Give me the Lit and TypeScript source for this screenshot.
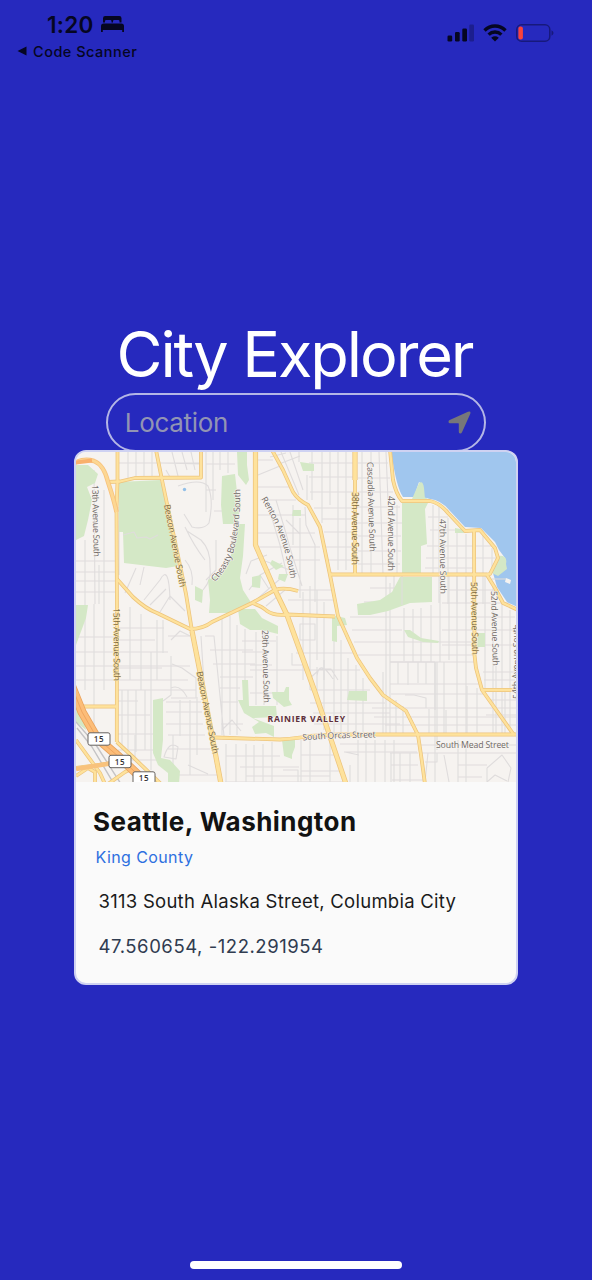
import { LitElement, html, svg, css } from "lit";
import { customElement } from "lit/decorators.js";

const MAJOR = [
  "M117.5 450V481L116.5 510L117 615L116.8 742",
  "M108 482L120 481.500L135 478L201 477.500V450",
  "M156 450L162 480L186 594L192 631L200 672L213 741L221 784",
  "M117 579L133 597Q146 609 157 613L190 629Q203 629 212 622L252 603L275 590Q284 587 298 591",
  "M252 603Q262 606 267 611Q274 616 287 614.500L335 616.500",
  "M272 450L283 470L293 492Q298 500 308 505L320 527L330 575L338 616L357 658L370 678L383 695L406 711L418 735L421 755L425 784",
  "M330 574.500H487L490 574L498 558L495 548L480 530L465 531L448 513Q440 503 430 501H402Q396 494 393 480L390 450",
  "M487 575L495 588L503 603L518 610",
  "M474 531L474.500 655L476 668L482 690L514 735",
  "M482 690H518",
  "M215 737.500L230 738L280 739.500Q300 738 310 736L340 734.500H516",
  "M76 706.500H116",
  "M116.800 742L133 757L161 784",
  "M76 740L100 773L105 784", "M76 768L113 763", "M108 784L125 772L133 768", "M95 784V772L88 768L76 776",
];
const WIDE = [
  "M255.500 450V545L275 590L287 615L315 692L346 784",
  "M355 450V480",
  "M192 631L200 672L213 741L221 784",
];
const THIN_MAJOR = ["M355 476V574"];
const RAMP = "M74 463Q84 458 94 461Q104 465 108 482Q114 500 116.500 512";

const PARKS = [
  "M76 465H88L98 474L95 483L87 487L92 500L88 520L84 536L76 540Z",
  "M119 482L160 480L169 505L178 566L166 568L124 563L123 532H119Z",
  "M76 605H88L86 618L76 645Z",
  "M76 690L82 708L86 730L76 722Z",
  "M237 452H247V465L249 480L246 485L238 475Z",
  "M222 476L235 474L237 492L241 505L237 524H223L221 505Z",
  "M237 524H245L243 556L240 578L243 590L252 604L230 611V613H209L210 600L208 580L222 572L230 560L234 540Z",
  "M195 586L203 590L202 603L195 600Z",
  "M300 462L314 464V471L303 471Z", "M293 510H301V516H292Z",
  "M272 560L284 566L276 570L270 564Z", "M279 574L288 574L285 582L278 579Z", "M252 577L261 575L260 588L252 587Z",
  "M238 609H255L262 618L278 626V634L262 630L250 630L240 624Z",
  "M242 680H248L249 706L276 706L277 717L253 718L274 726V737L266 733L255 734L252 727L259 722L244 713L238 700H243Z",
  "M272 692L284 692L286 687H289V700L292 705L284 707L273 698Z",
  "M282 740H295V747L292 755V759L284 756Z",
  "M332 615L345 618L347 625L337 626V642L332 641Z", "M349 691L367 691V701L347 700Z",
  "M153 700L163 698V740L161 758L170 760L180 771L179 784H168L168 773L158 765L153 753L153 728Z",
  "M402 502L416 499L423 497L422 485L420 481L423 484L428 503L425 509L427 544L421 546V575H402Z",
  "M400 577H432V602L410 603L388 611L370 615H358L357 604L380 600L392 592Z",
  "M455 528L466 530L464 533H455Z", "M478 633H485V647H477Z",
  "M404 630L410 630L421 638L439 641L438 643L423 642L408 637Z",
  "M498 558L506 560L506 570L500 575L494 571Z",
];

const MINOR = [
  /* northwest blocks */
  "M76 561H115M76 581H116M94 470L95 604M85 540V604M104 490V604M99 565V604M119 507V575M76 592H116M76 572H116",
  "M119 463H200M128 452V479M136 452V478M144 452V478M152 452V478M162 463L201 464M172 452L178 476M182 452L187 470M191 452L195 470",
  "M166 470L170 477M206 452V512M213 452V500M206 464H235M206 490H216M214 511H226M220 452V470M228 452V473",
  "M178 486Q200 478 208 486Q214 500 209 523Q204 530 192 527L184 514",
  "M187 531L201 540Q211 550 210 567Q212 580 203 590M185 527Q194 546 205 560",
  "M185 560Q194 570 192 585M216 540V570L206 580",
  "M140 585L144 567M144 600L160 580Q169 563 170 600M150 605L166 589M160 612L170 596L185 611M125 593L136 568",
  /* west blocks */
  "M76 637H120M76 652H168M76 666H190M76 680H188M85 604V690M94 604V734M104 604V690M130 607V680M141 614V690M157 620V680M163 620V653",
  "M118 628H164M118 640H155M118 668H162M118 690H196M122 690V750M128 690V750M136 690V752M145 690V750M151 652V770M118 701H138M118 715H150M118 734H155M118 750H157M168 636H190",
  "M171 640L180 631L190 636M171 656V695L163 701M172 664L182 668L196 678V698H171M171 688Q180 684 187 697",
  "M166 702H201M166 712H202M166 724H203M168 735H205M168 749H210M190 700V775M180 700V736M173 735V770M197 697V755M164 757Q169 740 178 747L176 759Z",
  "M168 775H222M188 765L208 774M145 760H160M118 757V750M135 735V757M128 760H154",
  /* central */
  "M201 636L205 700M205 636H214L224 736M210 650H253M213 664H255M222 618V735M230 616V735M237 625V735M245 629V700M220 677H253M220 688H240M221 702H238M221 724H243M222 730L232 720L241 731",
  "M256 632V705M264 628V705M277 636V705M242 641H276M242 652H264M250 665H272M250 693H280M250 670H310",
  "M256 460H273M258 475L280 466M256 487H290M260 500H296M258 515H306M256 533H315M258 547H320M270 457L286 453M279 464L300 456",
  "M281 452L299 495M290 452L303 490M299 452V462M307 475V500M312 452V500M322 452V523M330 452V505M338 452V570M346 452V570M309 463H355M309 477H355M310 492H355M314 508H354M322 519H355M324 532H355M326 547H355M328 560H355",
  "M268 505L280 545L287 575M276 500L285 530L290 548L302 586M293 505V545M300 518V598M305 507L306 525L315 545V602M286 520L300 534M262 560L290 570M260 575L282 563M285 560H320",
  "M246 574L251 561L267 555M249 590L260 575L269 589M256 600L280 579M266 606L285 590M303 592V680M310 586V690M317 590V660M324 602V680M288 600H333M289 590H333",
  "M300 624V640H315V624ZM296 653H355M292 653V665H302M304 670H360M308 680L320 669H331L338 680M310 690H370M317 667V690M324 660V730M334 615V735M341 640V735M348 658V735M356 665V735M363 678V735M310 703H385M313 713H390M314 724H400M317 676Q319 658 333 679",
  "M226 744V782M236 744V782M246 744V782M254 745V782M263 744V782M272 742V782M301 740V782M310 740V782M330 740V782M226 756H280M240 767H299M246 776H330M301 755H336M301 771H342M283 770H298V782M225 782H344",
  "M340 744H417M344 752H417M350 765V782M358 740V782M366 740V782M375 740V782M385 740V782M394 740V782M345 752L359 755",
  /* eastern strip */
  "M362 452V573M371 452V574M379 452L383 574M386 452L388 500M397 505V574M358 463H388M358 478H390M358 492H393M358 507H400M358 523H402M358 536H401M358 551H401M358 564H400",
  "M433 505V574M439 505V603M448 518V604M457 533V604M466 534V604M483 532V604M492 548V570M428 517H448M430 530H460M427 546H495M426 558H498M425 568H475",
  "M386 576V735M394 576V605M404 608V661M413 609V662M421 608V662M431 605V662M440 575V662M449 575V660M457 575V735M466 575V735M485 576V690M493 585V735M502 604V735M510 610V735",
  "M370 588H402M364 602H374M350 617H472M352 630H402M354 642H475M358 655H475M390 662H435M435 662V785M444 662V734M390 583V735M442 590H515M442 603H512M442 617H515M442 630H515M442 645H517",
  "M390 662H475M390 684H480M391 694H483M383 672V735M398 662V684M408 662V685M418 662V683M426 662V684M435 662V710M467 686V735M477 688V735",
  "M405 695H414L426 698V708M372 708H517M374 717H517M385 725H517M429 709V735M437 662V750M446 710V735M396 700V735M403 706V735",
  "M483 672H515M484 680H515M496 655V735M488 700H517M505 690V735M486 715H517",
  "M421 745H517M421 753H517M390 753H418M391 765H418M392 780H425M391 753V782M400 753V782M410 753V782M428 753L425 782M437 753V762H425M444 755L449 782M458 740V782M466 745V782M458 765H487M458 777H482M487 768L502 755L511 768L508 782M487 768V782L495 775L507 781",
];

const RAIL = "M76 722L96 745L121 784M77 728L92 747L114 784";

type Label = [string, string, number, string?];
/* name, baseline path, drawn length, colour class */
const LABELS: Label[] = [
  ["13th Avenue South", "M92 485L94 565", 72],
  ["Beacon Avenue South", "M164 505L182 598", 84, "onroad"],
  ["15th Avenue South", "M113.500 608L114 690", 73, "onroad"],
  ["Beacon Avenue South", "M196.500 672L215 765", 84, "onroad"],
  ["29th Avenue South", "M262 630L264 710", 73],
  ["Cheasty Boulevard South", "M215 582Q234 562 237 535Q241 515 240 478", 99],
  ["Renton Avenue South", "M261 499Q271 515 277 529Q287 552 291.500 585", 86],
  ["38th Avenue South", "M352 492V575", 73, "onroad"],
  ["Cascadia Avenue South", "M367 462L370 562", 90],
  ["42nd Avenue South", "M387.500 496V580", 75],
  ["47th Avenue South", "M439.500 519L440.500 605", 75],
  ["50th Avenue South", "M471 582L472.500 665", 73, "onroad"],
  ["52nd Avenue South", "M491 591L493 675", 75],
  ["54th Avenue South", "M519.500 699V600", 75],
  ["South Orcas Street", "M303 740.500Q335 737.500 390 737.500", 73],
  ["South Mead Street", "M436 748H520", 73],
];

const SHIELDS: [number, number][] = [[99, 739], [120, 761.500], [144, 778]];

@customElement("city-map")
export class CityMap extends LitElement {
  static styles = css`
    :host { display: block; height: 330px; }
    svg { display: block; width: 100%; height: 100%; }
    path { fill: none; stroke-linejoin: round; }
    .land { fill: #f6f3f0; }
    .park { fill: #d4e8c6; }
    .water { fill: #a0c6ee; }
    .minor { stroke: #dfdcdc; stroke-width: 1.1; }
    .rail { stroke: #c4c3c5; stroke-width: 1.4; }
    .case { stroke: #edc47c; stroke-width: 3.8; }
    .fill { stroke: #fee29c; stroke-width: 2.3; }
    .wcase { stroke: #edc47c; stroke-width: 5.2; }
    .wfill { stroke: #fee29c; stroke-width: 3.7; }
    .fwcase { stroke: #e9a25c; stroke-width: 9; }
    .fw { stroke: #fcbd78; stroke-width: 7.5; }
    .fwend { stroke: #f9b06c; stroke-width: 4; }
    .fwline { stroke: #f0a55f; stroke-width: 1; }
    .ramp { stroke: #f8c27c; stroke-width: 4.5; }
    .rampin { stroke: #fcd793; stroke-width: 2.8; }
    text { font-family: "Open Sans", "Noto Sans", sans-serif; font-size: 8.8px; fill: #6f6864; stroke: #f8f5f2; stroke-width: 1.2px; paint-order: stroke; stroke-linejoin: round; }
    .onroad { fill: #7b683e; stroke: #fde9b8; stroke-width: 1px; }
    .district { font-weight: 700; font-size: 8.6px; fill: #5e2f3b; }
    .shield { fill: #fff; stroke: #66625f; stroke-width: 1; }
    .route { font-weight: 600; font-size: 8px; fill: #333; stroke: none; text-anchor: middle; letter-spacing: 0.6px; }
  `;

  render() {
    const draw = (list: string[], cls: string) => list.map((d) => svg`<path class=${cls} d=${d}></path>`);
    return html`<svg viewBox="76 452 440 330" preserveAspectRatio="none">
      <rect class="land" x="75" y="451" width="443" height="332"></rect>
      ${draw(MINOR, "minor")}
      ${draw(PARKS, "park")}
      <path class="minor" d="M123 535L134 532L137 538L146 537L150 539L158 535M402 574V605"></path>
      <path class="water" d="M391 450H520V608L507 602L497 587L493 573L500 567L505 558L499 550L495 542L481 528L465 527L450 511Q441 500 430 499L423 497V485L419 482L414 497L403 497Q396 487 391 450Z"></path>
      <path class="park" d="M412 499L419 483Q423 480 424 488L425 499ZM497 556Q508 554 506 564L507 569L498 576L492 573Z"></path>
      <path class="land" d="M506 578L511 580L510 584L505 582Z"></path>
      <path class="minor" d="M492 579H506"></path>
      <circle cx="184.500" cy="489.500" r="1.700" fill="#92bfe8"></circle>
      <path class="rail" d=${RAIL}></path>
      ${draw(MAJOR, "case")}${draw(THIN_MAJOR, "case")}${draw(WIDE, "wcase")}
      ${draw(MAJOR, "fill")}${draw(THIN_MAJOR, "fill")}${draw(WIDE, "wfill")}
      <path class="ramp" d=${RAMP}></path><path class="rampin" d=${RAMP}></path>
      <path class="fwend" d="M72 463L92 460.500"></path>
      <path class="fwcase" d="M70 682L82 712L97 738L119 757L150 786"></path>
      <path class="fw" d="M70 682L82 712L97 738L119 757L150 786"></path>
      <path class="fwline" d="M70 682L82 712L97 738L119 757L150 786"></path>
      <path class="ramp" d="M76 769L113 763"></path>
      ${LABELS.map(
        ([name, d, len, cls], i) => svg`<path id=${"l" + i} d=${d}></path>
          <text class=${cls ?? "street"} textLength=${len}><textPath href=${"#l" + i} textLength=${len}>${name}</textPath></text>`
      )}
      <text class="district" x="267.500" y="721.500" textLength="77.500">RAINIER VALLEY</text>
      ${SHIELDS.map(
        ([x, y]) => svg`<rect class="shield" x=${x - 11} y=${y - 6.2} width="22" height="12.400" rx="2"></rect>
          <text class="route" x=${x} y=${y + 3}>15</text>`
      )}
    </svg>`;
  }
}

@customElement("status-bar")
export class StatusBar extends LitElement {
  static styles = css`
    :host { display: flex; justify-content: space-between; height: 80px; box-sizing: border-box; padding: 10px 38px 0 17px; color: #050622; }
    .clock { display: flex; align-items: center; gap: 6px; height: 28px; padding-left: 30px; font-size: 22.5px; font-weight: 600; letter-spacing: 0.3px; }
    .back { display: flex; align-items: center; gap: 6px; height: 26px; font-size: 14.5px; font-weight: 500; letter-spacing: 0.5px; }
    .right { display: flex; align-items: center; height: 46px; gap: 9px; }
    svg { display: block; }
  `;

  render() {
    return html`<div>
        <div class="clock">
          <span>1:20</span>
          <svg width="25" height="18" viewBox="0 0 25 18" fill="currentColor">
            <path d="M3 7.500V3.200Q3 1 5.200 1H19.300Q21.500 1 21.500 3.200V7.500H19.500V6.200Q19.500 5 18.300 5H14.200Q13 5 13 6.200V7.500H11.500V6.200Q11.500 5 10.300 5H6.200Q5 5 5 6.200V7.500Z"></path>
            <path d="M1 17V11.200Q1 8.500 3.700 8.500H21.300Q24 8.500 24 11.200V17H22.200V15H2.800V17Z"></path>
          </svg>
        </div>
        <div class="back">
          <svg width="10" height="10" viewBox="0 0 10 10" fill="currentColor"><path d="M0.500 5L9.500 0.500V9.500Z"></path></svg>
          <span>Code Scanner</span>
        </div>
      </div>
      <div class="right">
        <svg width="27" height="18" viewBox="0 0 27 18" fill="currentColor">
          <rect x="0.500" y="11.500" width="4.700" height="6" rx="1.300"></rect>
          <rect x="8" y="8" width="4.700" height="9.500" rx="1.300"></rect>
          <rect x="15.300" y="4.500" width="4.700" height="13" rx="1.300"></rect>
          <rect x="22.300" y="0.500" width="4.700" height="17" rx="1.300" opacity="0.3"></rect>
        </svg>
        <svg width="24" height="18" viewBox="0 0 24 18" fill="none" stroke="currentColor" stroke-width="3.300">
          <path d="M1.500 6.500Q6 2 12 2T22.500 6.500"></path>
          <path d="M5.600 10.600Q8.300 8 12 8T18.400 10.600"></path>
          <path d="M12 17.500L8.200 13.800Q12 10.900 15.800 13.800Z" fill="currentColor" stroke="none"></path>
        </svg>
        <svg width="38" height="18" viewBox="0 0 38 18">
          <rect x="0.800" y="0.800" width="33" height="16.400" rx="4.800" fill="none" stroke="#17197c" stroke-width="1.500"></rect>
          <rect x="2.400" y="2.600" width="4.500" height="12.800" rx="2" fill="#f9423c"></rect>
          <path d="M35.500 6.300Q37.500 7.200 37.500 9T35.500 11.700Z" fill="#17197c"></path>
        </svg>
      </div>`;
  }
}

@customElement("app-root")
export class AppRoot extends LitElement {
  static styles = css`
    :host { display: flex; flex-direction: column; align-items: center; height: 1280px; box-sizing: border-box; background: #2629be; font-family: Inter, "Liberation Sans", sans-serif; overflow: hidden; }
    status-bar { width: 100%; flex: none; }
    h1 { margin: 236px 3px 0 0; padding: 0; height: 76.500px; line-height: 77px; font-size: 63px; font-weight: 400; letter-spacing: -2.1px; color: #fff; white-space: nowrap; }
    .search { display: flex; align-items: center; justify-content: space-between; width: 379.500px; height: 59px; box-sizing: border-box; border: 2px solid #b4b6e6; border-radius: 30px; padding: 0 13px 0 16.500px; flex: none; }
    .hint { font-size: 26px; letter-spacing: -0.3px; color: #9294b4; }
    .card { width: 444px; height: 535px; margin-top: -1.500px; box-sizing: border-box; border: 2px solid #cfd2f2; border-radius: 12px; overflow: hidden; background: #fafafa; flex: none; white-space: nowrap; }
    .info { display: flex; flex-direction: column; padding: 22px 17px 0; }
    .city { font-size: 26px; line-height: 36px; font-weight: 700; letter-spacing: 0.45px; color: #121212; }
    .county { padding: 5px 0 0 2.500px; font-size: 16px; line-height: 24px; letter-spacing: 0.4px; color: #2d6fe0; }
    .line { padding: 18px 0 0 5.500px; font-size: 18.500px; line-height: 28px; letter-spacing: 0.26px; color: #1a1a1a; }
    .coords { padding-top: 17px; letter-spacing: 0.55px; color: #303c50; }
    .home { width: 212px; height: 8px; margin-top: auto; margin-bottom: 11px; border-radius: 4px; background: #fff; flex: none; }
  `;

  render() {
    return html`<status-bar></status-bar>
      <h1>City Explorer</h1>
      <div class="search">
        <span class="hint">Location</span>
        <svg width="23" height="23" viewBox="0 0 23 23"><path d="M22.200 3L14 21.300Q13.300 22.700 12 22.500Q10.800 22.300 10.800 21V12.800Q10.800 12.200 10.200 12.200H2Q0.700 12.200 0.500 11Q0.300 9.800 1.700 9.100L20 0.800Q21.600 0.200 22.200 0.800Q22.800 1.500 22.200 3Z" fill="#77777a"></path></svg>
      </div>
      <div class="card">
        <city-map></city-map>
        <div class="info">
          <div class="city">Seattle, Washington</div>
          <div class="county">King County</div>
          <div class="line">3113 South Alaska Street, Columbia City</div>
          <div class="line coords">47.560654, -122.291954</div>
        </div>
      </div>
      <div class="home"></div>`;
  }
}
